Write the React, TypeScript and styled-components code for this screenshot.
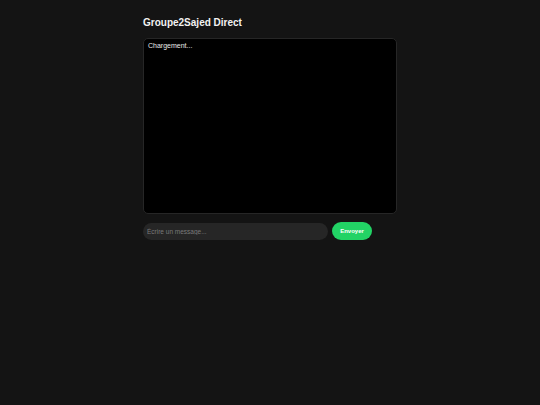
import styled, { createGlobalStyle } from "styled-components";

const GlobalStyle = createGlobalStyle`
  html, body {
    margin: 0;
    padding: 0;
    background: #141414;
    font-family: "Liberation Sans", Arial, sans-serif;
  }
`;

const Page = styled.div`
  width: 254px;
  margin: 0 auto;
  padding-top: 15px;
`;

const Title = styled.h1`
  font-size: 10px;
  font-weight: 700;
  color: #f2f2f2;
  margin: 0 0 8px;
  line-height: 15px;
`;

const ChatBox = styled.div`
  height: 176px;
  box-sizing: border-box;
  background: #000;
  border: 1px solid #262626;
  border-radius: 5px;
  padding: 2px 4px;
  color: #e8e8e8;
  font-size: 7px;
  line-height: 10px;
`;

const InputRow = styled.form`
  display: flex;
  align-items: center;
  gap: 4px;
  margin-top: 8px;
`;

const MessageInput = styled.input`
  flex: 1;
  height: 17px;
  box-sizing: border-box;
  border: none;
  outline: none;
  border-radius: 9px;
  background: #262626;
  color: #ddd;
  padding: 0 4px;
  font-family: inherit;
  font-size: 6.5px;

  &::placeholder {
    color: #7a7a7a;
  }
`;

const SendButton = styled.button`
  width: 40px;
  height: 18px;
  border: none;
  border-radius: 9px;
  background: #22d365;
  color: #fff;
  font-family: inherit;
  font-size: 6px;
  font-weight: 700;
  padding: 0;
  margin-right: 25px;
  cursor: pointer;
`;

export default function App() {
  return (
    <>
      <GlobalStyle />
      <Page>
        <Title>Groupe2Sajed Direct</Title>
        <ChatBox>Chargement...</ChatBox>
        <InputRow onSubmit={(e) => e.preventDefault()}>
          <MessageInput placeholder="Écrire un message..." />
          <SendButton type="submit">Envoyer</SendButton>
        </InputRow>
      </Page>
    </>
  );
}
